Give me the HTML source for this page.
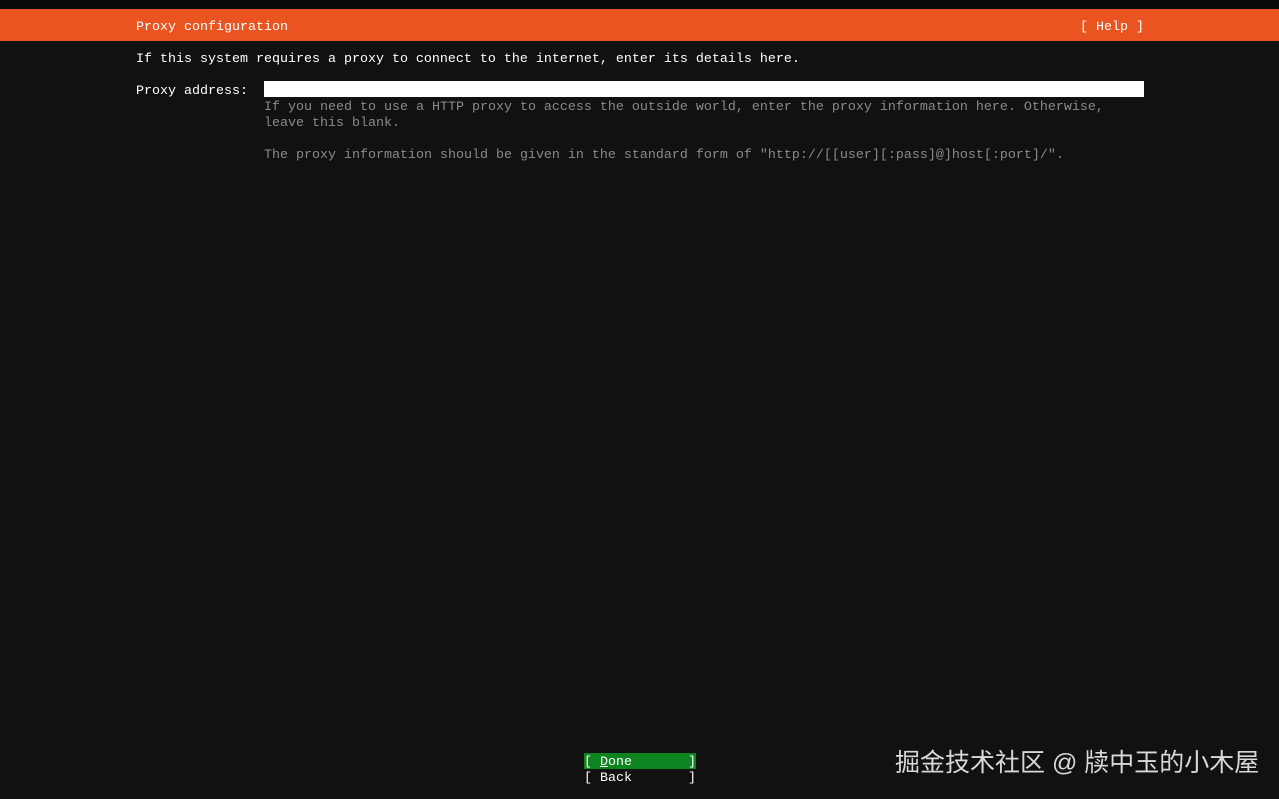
<!DOCTYPE html>
<html><head><meta charset="utf-8"><style>
body{margin:0;width:1279px;height:799px;background:#111;overflow:hidden;position:relative;font-family:"Liberation Mono",monospace;font-size:13.33px;color:#fff}
.t{position:absolute;white-space:pre;line-height:16px;height:16px}
.g{color:#8a8a8a}
</style></head><body>
<div style="position:absolute;left:0;top:0;width:1279px;height:9px;background:#0a0a0a"></div>
<div style="position:absolute;left:0;top:9px;width:1279px;height:32px;background:#e95420"></div>
<div class="t" style="left:136px;top:20px">Proxy configuration</div>
<div class="t" style="left:1080px;top:20px">[ Help ]</div>
<div class="t" style="left:136px;top:52px">If this system requires a proxy to connect to the internet, enter its details here.</div>
<div class="t" style="left:136px;top:84px">Proxy address:</div>
<div style="position:absolute;left:264px;top:81px;width:880px;height:16px;background:#fff"></div>
<div class="t g" style="left:264px;top:100px">If you need to use a HTTP proxy to access the outside world, enter the proxy information here. Otherwise,</div>
<div class="t g" style="left:264px;top:116px">leave this blank.</div>
<div class="t g" style="left:264px;top:148px">The proxy information should be given in the standard form of "http://[[user][:pass]@]host[:port]/".</div>
<div style="position:absolute;left:584px;top:753px;width:112px;height:16px;background:#0e8420"></div>
<div class="t" style="left:584px;top:755px">[ <u>D</u>one       ]</div>
<div class="t" style="left:584px;top:771px">[ Back       ]</div>
<div style="position:absolute;left:895px;top:747px;font-family:'Liberation Sans','Noto Sans CJK SC',sans-serif;font-size:25px;line-height:32px;color:#d8d8d8;white-space:nowrap">掘金技术社区 @ 牍中玉的小木屋</div>
</body></html>
